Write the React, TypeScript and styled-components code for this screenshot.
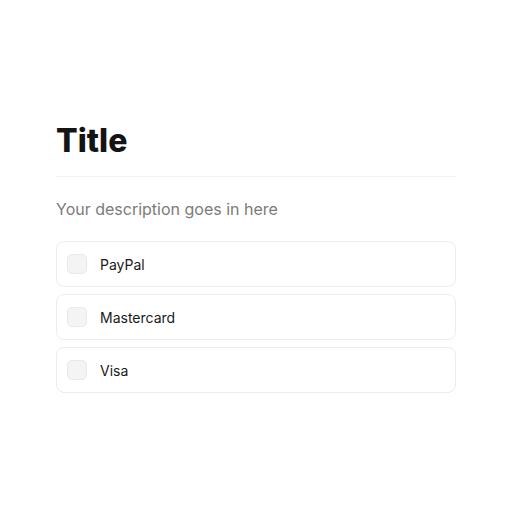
import React from "react";
import styled, { createGlobalStyle } from "styled-components";

const Global = createGlobalStyle`
  html, body { margin: 0; padding: 0; background: #ffffff; }
  body { font-family: Inter, "Noto Sans", sans-serif; }
  * { box-sizing: border-box; }
`;

const Page = styled.div`
  min-height: 100vh;
  padding-top: 2px;
  display: flex;
  align-items: center;
  justify-content: center;
`;

const Panel = styled.div`
  width: 400px;
  display: flex;
  flex-direction: column;
`;

const Title = styled.h1`
  margin: 0;
  font-size: 32px;
  font-weight: 800;
  line-height: 39px;
  color: #141414;
  padding-bottom: 16px;
  border-bottom: 1px solid #f2f2f2;
`;

const Description = styled.p`
  margin: 20px 0 20px;
  font-size: 16px;
  line-height: 24px;
  color: #7b7b7b;
`;

const List = styled.div`
  display: flex;
  flex-direction: column;
  gap: 7px;
`;

const Option = styled.label`
  display: flex;
  align-items: center;
  gap: 13px;
  height: 46px;
  padding: 0 10px;
  border: 1px solid #ececec;
  border-radius: 8px;
  cursor: pointer;
`;

const Box = styled.span`
  width: 20px;
  height: 20px;
  border-radius: 5px;
  background: #f4f4f4;
  border: 1px solid #e9e9e9;
  flex-shrink: 0;
`;

const Label = styled.span`
  font-size: 14px;
  color: #1a1a1a;
`;

const items = ["PayPal", "Mastercard", "Visa"];

export default function App() {
  return (
    <>
      <Global />
      <Page>
        <Panel>
          <Title>Title</Title>
          <Description>Your description goes in here</Description>
          <List>
            {items.map((it) => (
              <Option key={it}>
                <Box />
                <Label>{it}</Label>
              </Option>
            ))}
          </List>
        </Panel>
      </Page>
    </>
  );
}
